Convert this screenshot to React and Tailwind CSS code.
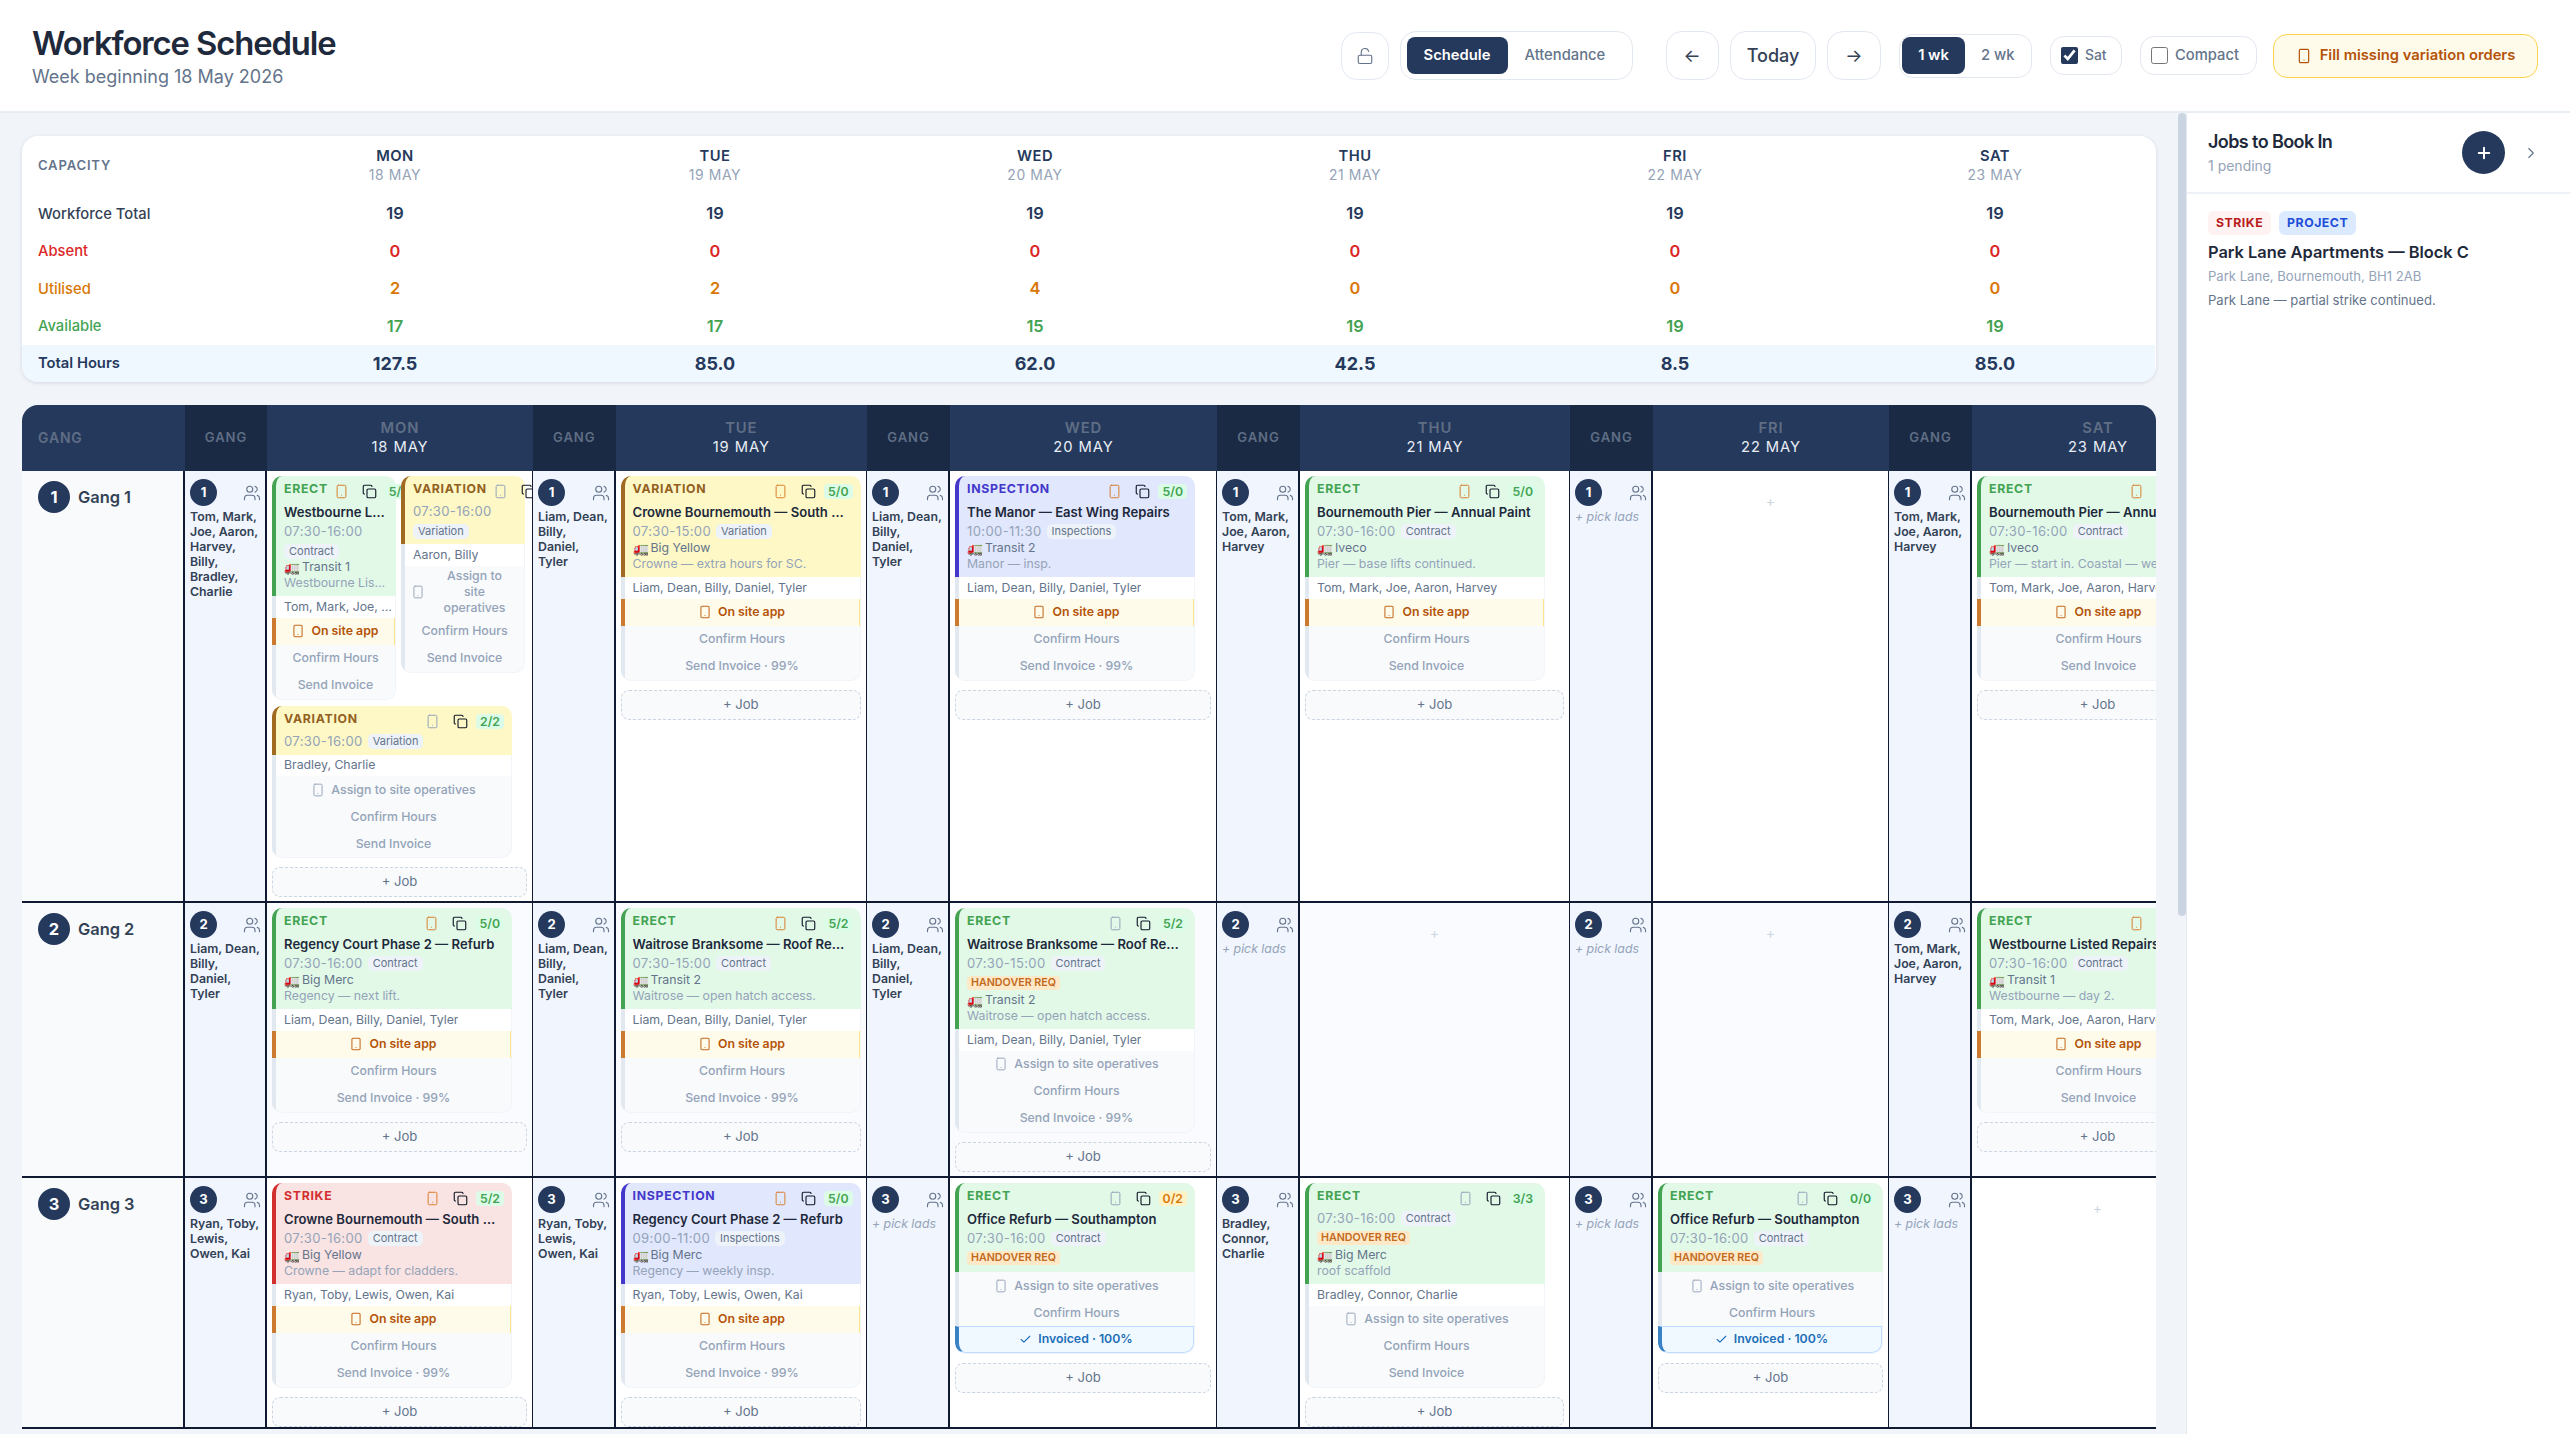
import React from "react";
import { Smartphone, Copy, Users, LockOpen, Plus, ChevronRight, Check } from "lucide-react";

const KINDS = {
  ERECT: { top: "bg-[#e2f9e8] border-l-[#43a352]", label: "text-[#43a352]" },
  VARIATION: { top: "bg-[#fdf8c6] border-l-[#a16a22]", label: "text-[#93601f]" },
  INSPECTION: { top: "bg-[#e1e7fd] border-l-[#4338ca]", label: "text-[#4338ca]" },
  STRIKE: { top: "bg-[#fae3e3] border-l-[#d32f2f]", label: "text-[#d32f2f]" },
};

const COUNT = {
  green: "bg-[#dcfce7] text-[#43a352]",
  orange: "bg-[#fef3c7] text-[#d97706]",
};

function StageRow({ children }) {
  return (
    <div className="flex min-h-[27px] items-center justify-center gap-[6px] border-l-4 border-l-[#e2e8f0] px-[6px] text-center text-[12.3px] leading-[16px] font-medium text-[#94a3b8]">
      {children}
    </div>
  );
}

function Card({ kind, title, time, tag, handover, van, note, names, count, countTone = "green", phoneOn, stage, invoice, width = "w-[240px]", noPad }) {
  const k = KINDS[kind];
  return (
    <div className={`${width} shrink-0 flex flex-col`}>
      <div className={`rounded-t-[10px] border-l-4 pl-[8px] pr-[8px] pb-[5px] ${k.top}`}>
        <div className="flex h-[26px] items-end pb-[3px] whitespace-nowrap">
          <span className={`text-[12.3px] font-bold tracking-[0.7px] leading-[20px] ${k.label}`}>{kind}</span>
          <span className="ml-auto flex items-center pl-[6px]">
            <Smartphone size={15} strokeWidth={1.6} className={phoneOn ? "text-[#d97f2e]" : "text-[#94a3b8]"} />
            <Copy size={15} strokeWidth={1.8} className="ml-[13px] text-[#111827]" />
            {count && (
              <span className={`ml-[8px] rounded-[4px] px-[4px] text-[12.3px] font-semibold leading-[15px] ${COUNT[countTone]}`}>{count}</span>
            )}
          </span>
        </div>
        {title && (
          <div className="truncate text-[13.1px] font-semibold leading-[20px] text-[#1e293b]">{title}</div>
        )}
        <div className="mt-[1px] flex flex-wrap items-center gap-x-[5px] gap-y-[4px]">
          <span className="text-[13.1px] leading-[17px] tracking-[0.35px] text-[#94a3b8]">{time}</span>
          <span className="rounded-[5px] bg-[#eef2f9] px-[5px] text-[11px] leading-[15px] text-[#64748b]">{tag}</span>
        </div>
        {handover && (
          <div className="mt-[4px] mb-[2px] w-fit rounded-[4px] bg-[#fde9c8] px-[4px] text-[10.7px] font-semibold leading-[14px] text-[#c2691c]">HANDOVER REQ</div>
        )}
        {van && (
          <div className="flex items-center gap-[2px] text-[12.3px] leading-[16px] text-[#64748b]">
            <span className="text-[13px] leading-[16px]">🚛</span>
            <span className="truncate">{van}</span>
          </div>
        )}
        {note && <div className="truncate text-[12.3px] leading-[16px] text-[#94a3b8]">{note}</div>}
      </div>
      <div className="overflow-hidden rounded-b-[10px] border-r border-b border-[#f1f5f9] bg-[#f8fafc]">
        {names && (
          <div className="flex h-[21.5px] items-center truncate border-l-4 border-l-[#e2e8f0] bg-white pl-[8px] text-[12.3px] text-[#64748b]">
            <span className="truncate">{names}</span>
          </div>
        )}
        {stage === "onsite" ? (
          <div className="flex h-[27px] items-center justify-center gap-[6px] border-l-4 border-l-[#cc7a30] border-r border-r-[#fde68a] bg-[#fffbeb] text-[12.3px] font-semibold text-[#b45309]">
            <Smartphone size={14} strokeWidth={1.8} className="text-[#c2691c]" />
            On site app
          </div>
        ) : (
          <StageRow>
            <Smartphone size={14} strokeWidth={1.6} className="shrink-0 text-[#94a3b8]" />
            <span className={width === "w-[124px]" ? "py-[2px] w-[78px] mx-auto" : ""}>Assign to site operatives</span>
          </StageRow>
        )}
        <StageRow>Confirm Hours</StageRow>
        {invoice === "paid" ? (
          <div className="flex h-[27px] items-center justify-center gap-[6px] rounded-b-[10px] border border-l-4 border-[#bfdbfe] border-l-[#3b82c4] bg-[#f0f9ff] text-[12.3px] font-semibold text-[#1d6fb8]">
            <Check size={13} strokeWidth={2} />
            Invoiced · 100%
          </div>
        ) : (
          <StageRow>{invoice}</StageRow>
        )}
      </div>
    </div>
  );
}

function AddJob() {
  return (
    <div className="mt-[9px] flex h-[30px] items-center justify-center rounded-[8px] border border-dashed border-[#cbd5e1] bg-[#f8fafc] text-[13.1px] text-[#64748b]">
      + Job
    </div>
  );
}

function GangCell({ n, names }) {
  return (
    <div className="border-r-2 border-b-2 border-[#101a33] bg-[#f0f5fe] pl-[5px] pr-[4px] pt-[8px]">
      <div className="flex items-center justify-between">
        <div className="flex h-[27px] w-[27px] items-center justify-center rounded-full bg-[#25395c] text-[13.1px] font-bold text-white">{n}</div>
        <Users size={18} strokeWidth={1.5} className="text-[#64748b]" />
      </div>
      {names ? (
        <div className="mt-[2.5px] text-[12.3px] font-semibold leading-[15px] text-[#334155]">{names}</div>
      ) : (
        <div className="mt-[2.5px] text-[12.3px] italic leading-[15px] text-[#94a3b8]">+ pick lads</div>
      )}
    </div>
  );
}

function DayCell({ children, empty, tint }) {
  return (
    <div className={`overflow-hidden border-r border-b-2 border-r-[#101a33] border-b-[#101a33] px-[5px] pt-[5px] ${tint ? "bg-[#fafbfe]" : "bg-white"}`}>
      {empty ? <div className="pt-[17px] text-center text-[14px] leading-[16px] text-[#cbd5e1]">+</div> : children}
    </div>
  );
}

function LeftCell({ n }) {
  return (
    <div className="flex items-start gap-[8px] border-r-2 border-b-2 border-[#101a33] bg-[#f8fafc] pl-[16px] pt-[10px]">
      <div className="flex h-[32px] w-[32px] items-center justify-center rounded-full bg-[#25395c] text-[16.4px] font-bold text-white">{n}</div>
      <div className="text-[16.4px] font-semibold leading-[32px] text-[#334155]">Gang {n}</div>
    </div>
  );
}

const TEAM_A = "Tom, Mark, Joe, Aaron, Harvey";
const TEAM_B = "Liam, Dean, Billy, Daniel, Tyler";
const TEAM_C = "Ryan, Toby, Lewis, Owen, Kai";

const DAYS = [
  ["MON", "18 MAY"],
  ["TUE", "19 MAY"],
  ["WED", "20 MAY"],
  ["THU", "21 MAY"],
  ["FRI", "22 MAY"],
  ["SAT", "23 MAY"],
];

const CAP = [
  { label: "Workforce Total", cls: "text-[#334155] font-medium", num: "text-[#25395c] font-semibold", vals: [19, 19, 19, 19, 19, 19] },
  { label: "Absent", cls: "text-[#dc2626] font-medium", num: "text-[#dc2626] font-semibold", vals: [0, 0, 0, 0, 0, 0] },
  { label: "Utilised", cls: "text-[#d97706] font-medium", num: "text-[#d97706] font-semibold", vals: [2, 2, 4, 0, 0, 0] },
  { label: "Available", cls: "text-[#43a352] font-medium", num: "text-[#43a352] font-semibold", vals: [17, 17, 15, 19, 19, 19] },
];

function Capacity() {
  return (
    <div className="overflow-hidden rounded-[16px] bg-white shadow-[0_1px_4px_rgba(15,23,42,0.12)]">
      <div className="grid grid-cols-[213px_repeat(6,320px)]">
        <div className="flex h-[59px] items-center pl-[16px] text-[13.1px] font-semibold tracking-[0.8px] text-[#64748b]">CAPACITY</div>
        {DAYS.map(([d, m]) => (
          <div key={d} className="flex h-[59px] flex-col items-center justify-center">
            <div className="text-[14.75px] font-semibold leading-[19px] tracking-[0.5px] text-[#25395c]">{d}</div>
            <div className="text-[13.9px] leading-[19px] tracking-[0.6px] text-[#94a3b8]">{m}</div>
          </div>
        ))}
        {CAP.map((r) => (
          <React.Fragment key={r.label}>
            <div className={`flex h-[37.5px] items-center pl-[16px] text-[14.75px] ${r.cls}`}>{r.label}</div>
            {r.vals.map((v, i) => (
              <div key={i} className={`flex h-[37.5px] items-center justify-center text-[16.4px] ${r.num}`}>{v}</div>
            ))}
          </React.Fragment>
        ))}
        <div className="flex h-[37px] items-center bg-[#f0f8ff] pl-[16px] text-[14.75px] font-semibold text-[#25395c]">Total Hours</div>
        {["127.5", "85.0", "62.0", "42.5", "8.5", "85.0"].map((v, i) => (
          <div key={i} className="flex h-[37px] items-center justify-center bg-[#f0f8ff] text-[18px] font-bold text-[#25395c]">{v}</div>
        ))}
      </div>
    </div>
  );
}

function Schedule() {
  return (
    <div className="mt-[23px] overflow-hidden rounded-t-[16px]">
      <div className="grid w-[2202px] grid-cols-[163px_82px_266px_82.5px_251.5px_83px_267px_83px_270px_83px_236px_83px_252px] grid-rows-[66px_432px_275px_auto]">
        <div className="flex items-center bg-[#25395c] pl-[16px] text-[13.9px] font-semibold tracking-[0.9px] text-[#5f6e85]">GANG</div>
        {DAYS.map(([d, m]) => (
          <React.Fragment key={d}>
            <div className="flex items-center justify-center bg-[#1a2a44] text-[13.1px] font-semibold tracking-[0.9px] text-[#5f6e85]">GANG</div>
            <div className="flex flex-col items-center justify-center bg-[#25395c]">
              <div className="text-[14.75px] font-semibold leading-[19px] tracking-[0.9px] text-[#5f6e85]">{d}</div>
              <div className="text-[14.75px] leading-[19px] tracking-[0.9px] text-[#e8edf5]">{m}</div>
            </div>
          </React.Fragment>
        ))}

        {/* Gang 1 */}
        <LeftCell n={1} />
        <GangCell n={1} names="Tom, Mark, Joe, Aaron, Harvey, Billy, Bradley, Charlie" />
        <DayCell>
          <div className="flex items-start gap-[5px]">
            <Card width="w-[124px]" kind="ERECT" title="Westbourne Listed Repairs" time="07:30-16:00" tag="Contract" van="Transit 1" note="Westbourne Listed Repairs" names={TEAM_A} count="5/0" phoneOn stage="onsite" invoice="Send Invoice" />
            <Card width="w-[124px]" kind="VARIATION" time="07:30-16:00" tag="Variation" names="Aaron, Billy" count="0/2" countTone="orange" stage="assign" invoice="Send Invoice" />
          </div>
          <div className="mt-[6px]">
            <Card kind="VARIATION" time="07:30-16:00" tag="Variation" names="Bradley, Charlie" count="2/2" stage="assign" invoice="Send Invoice" />
          </div>
          <AddJob />
        </DayCell>
        <GangCell n={1} names={TEAM_B} />
        <DayCell>
          <Card kind="VARIATION" title="Crowne Bournemouth — South Coast Hotel" time="07:30-15:00" tag="Variation" van="Big Yellow" note="Crowne — extra hours for SC." names={TEAM_B} count="5/0" phoneOn stage="onsite" invoice="Send Invoice · 99%" />
          <AddJob />
        </DayCell>
        <GangCell n={1} names={TEAM_B} />
        <DayCell>
          <Card kind="INSPECTION" title="The Manor — East Wing Repairs" time="10:00-11:30" tag="Inspections" van="Transit 2" note="Manor — insp." names={TEAM_B} count="5/0" phoneOn stage="onsite" invoice="Send Invoice · 99%" />
          <AddJob />
        </DayCell>
        <GangCell n={1} names={TEAM_A} />
        <DayCell>
          <Card kind="ERECT" title="Bournemouth Pier — Annual Paint" time="07:30-16:00" tag="Contract" van="Iveco" note="Pier — base lifts continued." names={TEAM_A} count="5/0" phoneOn stage="onsite" invoice="Send Invoice" />
          <AddJob />
        </DayCell>
        <GangCell n={1} />
        <DayCell empty />
        <GangCell n={1} names={TEAM_A} />
        <DayCell>
          <Card kind="ERECT" title="Bournemouth Pier — Annual Paint" time="07:30-16:00" tag="Contract" van="Iveco" note="Pier — start in. Coastal — weigh" names={TEAM_A} count="5/0" phoneOn stage="onsite" invoice="Send Invoice" />
          <AddJob />
        </DayCell>

        {/* Gang 2 */}
        <LeftCell n={2} />
        <GangCell n={2} names={TEAM_B} />
        <DayCell tint>
          <Card kind="ERECT" title="Regency Court Phase 2 — Refurb" time="07:30-16:00" tag="Contract" van="Big Merc" note="Regency — next lift." names={TEAM_B} count="5/0" phoneOn stage="onsite" invoice="Send Invoice · 99%" />
          <AddJob />
        </DayCell>
        <GangCell n={2} names={TEAM_B} />
        <DayCell tint>
          <Card kind="ERECT" title="Waitrose Branksome — Roof Repairs" time="07:30-15:00" tag="Contract" van="Transit 2" note="Waitrose — open hatch access." names={TEAM_B} count="5/2" phoneOn stage="onsite" invoice="Send Invoice · 99%" />
          <AddJob />
        </DayCell>
        <GangCell n={2} names={TEAM_B} />
        <DayCell tint>
          <Card kind="ERECT" title="Waitrose Branksome — Roof Repairs" time="07:30-15:00" tag="Contract" handover van="Transit 2" note="Waitrose — open hatch access." names={TEAM_B} count="5/2" stage="assign" invoice="Send Invoice · 99%" />
          <AddJob />
        </DayCell>
        <GangCell n={2} />
        <DayCell empty tint />
        <GangCell n={2} />
        <DayCell empty tint />
        <GangCell n={2} names={TEAM_A} />
        <DayCell tint>
          <Card kind="ERECT" title="Westbourne Listed Repairs" time="07:30-16:00" tag="Contract" van="Transit 1" note="Westbourne — day 2." names={TEAM_A} count="5/0" phoneOn stage="onsite" invoice="Send Invoice" />
          <AddJob />
        </DayCell>

        {/* Gang 3 */}
        <LeftCell n={3} />
        <GangCell n={3} names={TEAM_C} />
        <DayCell>
          <Card kind="STRIKE" title="Crowne Bournemouth — South Coast Hotel" time="07:30-16:00" tag="Contract" van="Big Yellow" note="Crowne — adapt for cladders." names={TEAM_C} count="5/2" phoneOn stage="onsite" invoice="Send Invoice · 99%" />
          <AddJob />
        </DayCell>
        <GangCell n={3} names={TEAM_C} />
        <DayCell>
          <Card kind="INSPECTION" title="Regency Court Phase 2 — Refurb" time="09:00-11:00" tag="Inspections" van="Big Merc" note="Regency — weekly insp." names={TEAM_C} count="5/0" phoneOn stage="onsite" invoice="Send Invoice · 99%" />
          <AddJob />
        </DayCell>
        <GangCell n={3} />
        <DayCell>
          <Card kind="ERECT" title="Office Refurb — Southampton" time="07:30-16:00" tag="Contract" handover count="0/2" countTone="orange" stage="assign" invoice="paid" />
          <AddJob />
        </DayCell>
        <GangCell n={3} names="Bradley, Connor, Charlie" />
        <DayCell>
          <Card kind="ERECT" time="07:30-16:00" tag="Contract" handover van="Big Merc" note="roof scaffold" names="Bradley, Connor, Charlie" count="3/3" stage="assign" invoice="Send Invoice" />
          <AddJob />
        </DayCell>
        <GangCell n={3} />
        <DayCell>
          <Card width="w-full" kind="ERECT" title="Office Refurb — Southampton" time="07:30-16:00" tag="Contract" handover count="0/0" stage="assign" invoice="paid" />
          <AddJob />
        </DayCell>
        <GangCell n={3} />
        <DayCell empty />
      </div>
    </div>
  );
}

function Toolbar() {
  const box = "border border-[#e2e8f0] bg-white";
  return (
    <div className="flex items-center">
      <div className={`flex h-[48px] w-[48px] items-center justify-center rounded-[16px] ${box}`}>
        <LockOpen size={18} strokeWidth={1.5} className="text-[#64748b]" />
      </div>
      <div className={`ml-[11px] flex h-[49px] w-[233px] items-center rounded-[16px] pl-[6px] ${box}`}>
        <div className="flex h-[37px] w-[101px] items-center justify-center rounded-[8px] bg-[#25395c] text-[14.75px] font-semibold text-white">Schedule</div>
        <div className="ml-[17px] text-[14.75px] font-medium text-[#64748b]">Attendance</div>
      </div>
      <div className={`ml-[33px] flex h-[49px] w-[53px] items-center justify-center rounded-[16px] text-[18px] text-[#334155] ${box}`}>←</div>
      <div className={`ml-[11.5px] flex h-[49px] w-[86px] items-center justify-center rounded-[16px] text-[18px] font-medium text-[#334155] ${box}`}>Today</div>
      <div className={`ml-[11px] flex h-[49px] w-[53.5px] items-center justify-center rounded-[16px] text-[18px] text-[#334155] ${box}`}>→</div>
      <div className={`ml-[18.5px] flex h-[44px] w-[133px] items-center rounded-[14px] pl-[2px] ${box}`}>
        <div className="flex h-[37px] w-[63px] items-center justify-center rounded-[8px] bg-[#25395c] text-[14.75px] font-semibold text-white">1 wk</div>
        <div className="ml-[16px] text-[14.75px] font-medium text-[#64748b]">2 wk</div>
      </div>
      <label className={`ml-[18px] flex h-[39px] w-[72px] items-center rounded-[14px] pl-[10px] ${box}`}>
        <input type="checkbox" checked readOnly className="h-[17px] w-[17px] accent-[#25395c]" />
        <span className="ml-[7px] text-[13.9px] font-medium text-[#64748b]">Sat</span>
      </label>
      <label className={`ml-[18px] flex h-[39px] w-[116.5px] items-center rounded-[14px] pl-[10px] ${box}`}>
        <input type="checkbox" readOnly className="h-[17px] w-[17px] accent-[#25395c]" />
        <span className="ml-[7px] text-[14.75px] font-medium text-[#64748b]">Compact</span>
      </label>
      <div className="ml-[16.5px] flex h-[44px] w-[265px] items-center justify-center gap-[8px] rounded-[14px] border border-[#fcd34d] bg-[#fffbeb] text-[14.75px] font-semibold text-[#b45309]">
        <Smartphone size={16} strokeWidth={1.8} />
        Fill missing variation orders
      </div>
    </div>
  );
}

function Sidebar() {
  return (
    <aside className="w-[384px] shrink-0 border-l border-[#e2e8f0] bg-white">
      <div className="flex h-[81px] items-center border-b-2 border-[#eef2f6] pl-[21px] pr-[34px]">
        <div>
          <div className="text-[18px] font-semibold leading-[24px] tracking-[-0.6px] text-[#1e293b]">Jobs to Book In</div>
          <div className="mt-[3px] text-[14px] leading-[18px] text-[#94a3b8]">1 pending</div>
        </div>
        <div className="ml-auto flex h-[43px] w-[43px] items-center justify-center rounded-full bg-[#25395c] text-white">
          <Plus size={18} strokeWidth={2.6} />
        </div>
        <ChevronRight size={18} strokeWidth={1.5} className="ml-[17px] mr-[-4px] text-[#64748b]" />
      </div>
      <div className="pl-[21px] pt-[17px]">
        <div className="flex gap-[8px]">
          <span className="flex h-[24px] items-center rounded-[6px] bg-[#fef2f2] px-[8px] text-[12.3px] font-bold tracking-[0.5px] text-[#b91c1c]">STRIKE</span>
          <span className="flex h-[24px] items-center rounded-[6px] bg-[#dbeafe] px-[8px] text-[12.3px] font-bold tracking-[0.5px] text-[#1d4ed8]">PROJECT</span>
        </div>
        <div className="mt-[6px] text-[16.4px] font-semibold leading-[22px] text-[#1e293b]">Park Lane Apartments — Block C</div>
        <div className="mt-[3px] text-[13.1px] leading-[20px] text-[#94a3b8]">Park Lane, Bournemouth, BH1 2AB</div>
        <div className="mt-[4px] text-[13.1px] leading-[20px] text-[#64748b]">Park Lane — partial strike continued.</div>
      </div>
    </aside>
  );
}

export default function App() {
  return (
    <div className="flex h-[1434px] w-[2570px] flex-col overflow-hidden bg-[#f1f4f9] font-['Inter',sans-serif]">
      <header className="flex h-[113px] shrink-0 items-center justify-between border-b-2 border-[#e8ecf3] bg-white pl-[32px] pr-[32px]">
        <div>
          <h1 className="text-[32.8px] font-semibold leading-[40px] tracking-[-1.1px] text-[#1e293b]">Workforce Schedule</h1>
          <p className="mt-[2px] text-[18px] leading-[24px] text-[#64748b]">Week beginning 18 May 2026</p>
        </div>
        <Toolbar />
      </header>
      <div className="flex min-h-0 flex-1">
        <main className="min-w-0 flex-1 overflow-hidden px-[22px] pt-[23px]">
          <Capacity />
          <Schedule />
        </main>
        <div className="w-[8px] shrink-0">
          <div className="h-[803px] w-[8px] rounded-full bg-[#cbd5e1]" />
        </div>
        <Sidebar />
      </div>
    </div>
  );
}
